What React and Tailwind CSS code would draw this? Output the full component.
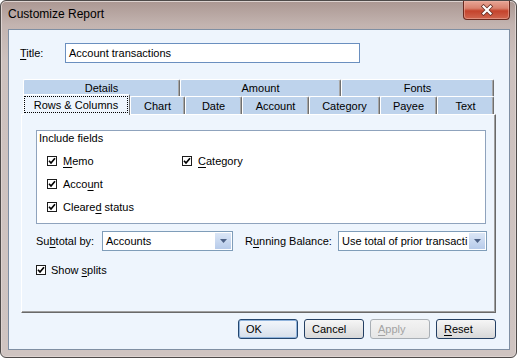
import React from "react";

const U = ({ children }) => (
  <span className="underline decoration-1 underline-offset-[2px]">{children}</span>
);

const Check = () => (
  <span className="w-[10px] h-[10px] border border-[#1c1c1c] bg-white flex items-center justify-center shrink-0">
    <svg width="8" height="8" viewBox="0 0 8 8">
      <path d="M1 3.8 L3 6 L7 1.3" fill="none" stroke="#000" strokeWidth="1.7" />
    </svg>
  </span>
);

const CheckRow = ({ children, gap = "gap-[6px]" }) => (
  <div className={`flex items-center h-[14px] ${gap}`}>
    <Check />
    <span className="leading-[14px]">{children}</span>
  </div>
);

const Tab = ({ w, children }) => (
  <div
    className={`${w} h-full shrink-0 bg-[#bed3ec] border-t border-l border-white border-r border-r-[#6f6f6f] shadow-[inset_-1px_0_0_#a6a6a6] rounded-t-[2px] flex items-center justify-center leading-[14px]`}
  >
    {children}
  </div>
);

const Select = ({ w, children }) => (
  <div className={`${w} h-[20px] border border-[#7f9db9] bg-white flex items-stretch`}>
    <div className="flex-1 overflow-hidden whitespace-nowrap pl-[3px] flex items-center leading-[14px]">
      {children}
    </div>
    <div className="w-[16px] m-[1px] ml-0 bg-[linear-gradient(180deg,#dbe6f6,#b7cbea)] flex items-center justify-center">
      <svg width="7" height="4" viewBox="0 0 7 4">
        <path d="M0 0 H7 L3.5 4 Z" fill="#4d6185" />
      </svg>
    </div>
  </div>
);

const Button = ({ children, variant }) => {
  let cls =
    "border-[#233f63] bg-[linear-gradient(180deg,#f6f6f6,#e4e4e4_60%,#d8d8d8)] text-black";
  if (variant === "default")
    cls =
      "border-[#23466f] bg-[linear-gradient(180deg,#f2f6fb,#e2e9f2_60%,#d6dfea)] shadow-[inset_0_0_0_1px_#8fb3dc] text-black";
  if (variant === "disabled")
    cls = "border-[#a9afb5] bg-[linear-gradient(180deg,#f3f3f3,#e6e6e6)] text-[#a3a3a3]";
  return (
    <div
      className={`w-[60px] h-[20px] border rounded-[3px] flex items-center pl-[7px] leading-[14px] ${cls}`}
    >
      {children}
    </div>
  );
};

export default function App() {
  return (
    <div className="w-[517px] h-[358px] font-['Liberation_Sans',Arial,sans-serif] text-[11px] text-black">
      <div className="w-[517px] h-[358px] rounded-[6px] border border-[#4e4a49] bg-[linear-gradient(180deg,#ab9792_0px,#c3b4b0_24px,#cdc1be_60px,#cfc4c1_100%)] shadow-[inset_0_0_0_1px_#ddd3d0] flex flex-col">
        {/* title bar */}
        <div className="h-[28px] flex items-start justify-between shrink-0">
          <span className="pl-[7px] pt-[6px] text-[12px] leading-[15px]">Customize Report</span>
          <div className="mr-[6px] w-[47px] h-[19px] rounded-b-[4px] border border-t-0 border-[#6a2a1f] bg-[linear-gradient(180deg,#e7a595_0%,#d9826e_40%,#c4432c_55%,#d0664f_100%)] shadow-[inset_0_0_0_1px_#efb9ab80] flex items-center justify-center">
            <svg width="14" height="12" viewBox="0 0 14 12">
              <path d="M3.5 2.5 L10.5 9.5 M10.5 2.5 L3.5 9.5" stroke="#6b3328" strokeWidth="3.8" strokeLinecap="square" />
              <path d="M3.5 2.5 L10.5 9.5 M10.5 2.5 L3.5 9.5" stroke="#ffffff" strokeWidth="2.2" strokeLinecap="square" />
            </svg>
          </div>
        </div>

        {/* client */}
        <div className="ml-[7px] mr-[6px] h-[321px] shrink-0 border border-[#7f8fa3] bg-[#eef5fd] flex flex-col">
          {/* title row */}
          <div className="mt-[13px] ml-[11px] flex items-center h-[20px]">
            <span className="w-[45px] leading-[14px]">
              <U>T</U>itle:
            </span>
            <div className="w-[295px] h-[20px] border border-[#6a8fbf] bg-white flex items-center pl-[3px] leading-[14px]">
              Account transactions
            </div>
          </div>

          {/* tabs */}
          <div className="mt-[16px] ml-[12px] w-[475px] flex flex-col">
            <div className="flex px-[2px] h-[17px]">
              <Tab w="w-[157px]">Details</Tab>
              <Tab w="w-[161px]">Amount</Tab>
              <Tab w="w-[153px]">Fonts</Tab>
            </div>
            <div className="flex px-[2px] h-[18px] items-end relative z-10">
              <div className="w-[107px] h-[21px] -mb-[1px] shrink-0 bg-[#eef5fd] border-t border-l border-white border-r border-r-[#6f6f6f] rounded-t-[2px] flex flex-col">
                <div className="mt-[1px] mr-[1px] h-[17px] border border-dotted border-black flex items-center justify-center leading-[14px]">
                  Rows &amp; Columns
                </div>
              </div>
              <Tab w="w-[55px]">Chart</Tab>
              <Tab w="w-[57px]">Date</Tab>
              <Tab w="w-[67px]">Account</Tab>
              <Tab w="w-[71px]">Category</Tab>
              <Tab w="w-[57px]">Payee</Tab>
              <Tab w="w-[57px]">Text</Tab>
            </div>

            {/* panel */}
            <div className="w-[475px] h-[199px] border border-t-white border-l-white border-r-[#696969] border-b-[#696969] shadow-[inset_-1px_-1px_0_#a0a0a0] bg-[#eef5fd] flex flex-col">
              {/* group box */}
              <div className="ml-[14px] mt-[15px] w-[450px] h-[94px] border border-[#8fa3bd] bg-white flex flex-col shrink-0">
                <div className="pl-[2px] h-[14px] leading-[14px]">Include fields</div>
                <div className="mt-[9px] flex">
                  <div className="flex flex-col gap-[9px] pl-[10px] w-[145px]">
                    <CheckRow>
                      <U>M</U>emo
                    </CheckRow>
                    <CheckRow>
                      Acco<U>u</U>nt
                    </CheckRow>
                    <CheckRow>
                      Cleare<U>d</U> status
                    </CheckRow>
                  </div>
                  <div className="flex flex-col">
                    <CheckRow>
                      <U>C</U>ategory
                    </CheckRow>
                  </div>
                </div>
              </div>

              {/* subtotal row */}
              <div className="mt-[7px] ml-[14px] flex items-center h-[20px]">
                <span className="w-[66px] leading-[14px]">
                  Su<U>b</U>total by:
                </span>
                <Select w="w-[131px]">Accounts</Select>
                <span className="ml-[12px] w-[93px] leading-[14px]">
                  R<U>u</U>nning Balance:
                </span>
                <Select w="w-[149px]">Use total of prior transacti</Select>
              </div>

              {/* show splits */}
              <div className="mt-[12px] ml-[14px]">
                <CheckRow gap="gap-[5px]">
                  Show <U>s</U>plits
                </CheckRow>
              </div>
            </div>
          </div>

          {/* buttons */}
          <div className="mt-[6px] mr-[13px] flex justify-end gap-[6px]">
            <Button variant="default">OK</Button>
            <Button>Cancel</Button>
            <Button variant="disabled">
              <U>A</U>pply
            </Button>
            <Button>
              <U>R</U>eset
            </Button>
          </div>
        </div>
      </div>
    </div>
  );
}
